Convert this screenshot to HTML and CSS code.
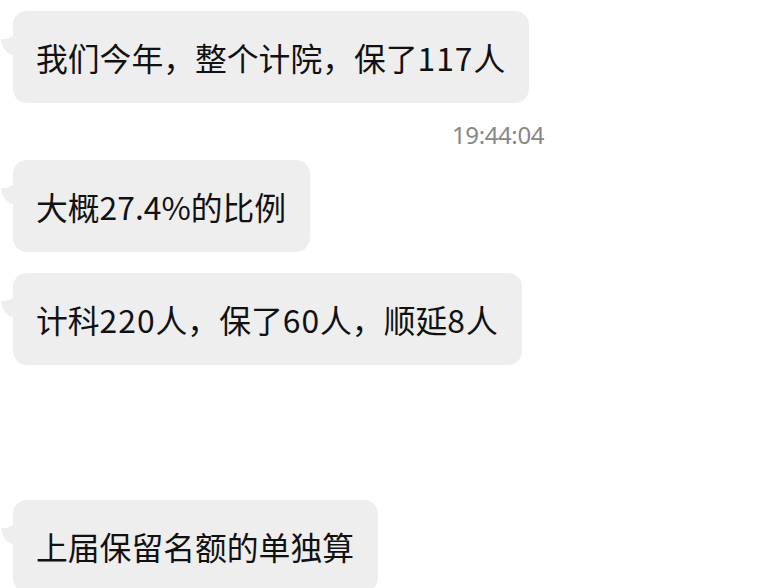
FILE: index.html
```html
<!DOCTYPE html>
<html lang="zh-CN">
<head>
<meta charset="utf-8">
<link rel="stylesheet" href="styles.css">
</head>
<body>
<div class="chat">
  <div class="msg">
    <svg class="tail" width="14" height="22" viewBox="0 0 14 22"><path d="M14 0 L14 20 C8 20 2 14 1 4 C5 5 10 3 14 0 Z" fill="#eeeeee"/></svg>
    <div class="bubble">我们今年，整个计院，保了<span class="num">117</span>人</div>
  </div>
  <div class="time">19:44:04</div>
  <div class="msg">
    <svg class="tail" width="14" height="22" viewBox="0 0 14 22"><path d="M14 0 L14 20 C8 20 2 14 1 4 C5 5 10 3 14 0 Z" fill="#eeeeee"/></svg>
    <div class="bubble">大概27.4%的比例</div>
  </div>
  <div class="msg">
    <svg class="tail" width="14" height="22" viewBox="0 0 14 22"><path d="M14 0 L14 20 C8 20 2 14 1 4 C5 5 10 3 14 0 Z" fill="#eeeeee"/></svg>
    <div class="bubble">计科<span class="num">220</span>人，保了<span class="num">60</span>人，顺延<span class="num">8</span>人</div>
  </div>
  <div class="msg msg-late">
    <svg class="tail" width="14" height="22" viewBox="0 0 14 22"><path d="M14 0 L14 20 C8 20 2 14 1 4 C5 5 10 3 14 0 Z" fill="#eeeeee"/></svg>
    <div class="bubble">上届保留名额的单独算</div>
  </div>
</div>
</body>
</html>
```
FILE: styles.css
```css
html, body {
  margin: 0;
  padding: 0;
  background: #ffffff;
  overflow: hidden;
}
body {
  width: 782px;
  height: 588px;
}
.chat {
  display: flex;
  flex-direction: column;
  align-items: flex-start;
  padding: 11px 0 0 0;
}
.msg {
  position: relative;
  display: flex;
  padding-left: 13px;
  margin-bottom: 21px;
}
.msg-late {
  margin-top: 114px;
}
.tail {
  position: absolute;
  left: 0;
  top: 24px;
}
.bubble {
  background: #eeeeee;
  border-radius: 14px;
  padding: 24px 24px 24px 23px;
  font-family: "Noto Sans CJK SC", "Noto Sans", sans-serif;
  font-size: 31.8px;
  line-height: 44px;
  color: #111111;
  white-space: nowrap;
}
.num {
  letter-spacing: 1px;
}
.time {
  margin: -5px 0 0 452px;
  height: 41px;
  font-family: "Noto Sans", "Liberation Sans", sans-serif;
  font-size: 24px;
  line-height: 32px;
  color: #888888;
  letter-spacing: -0.4px;
}
```
